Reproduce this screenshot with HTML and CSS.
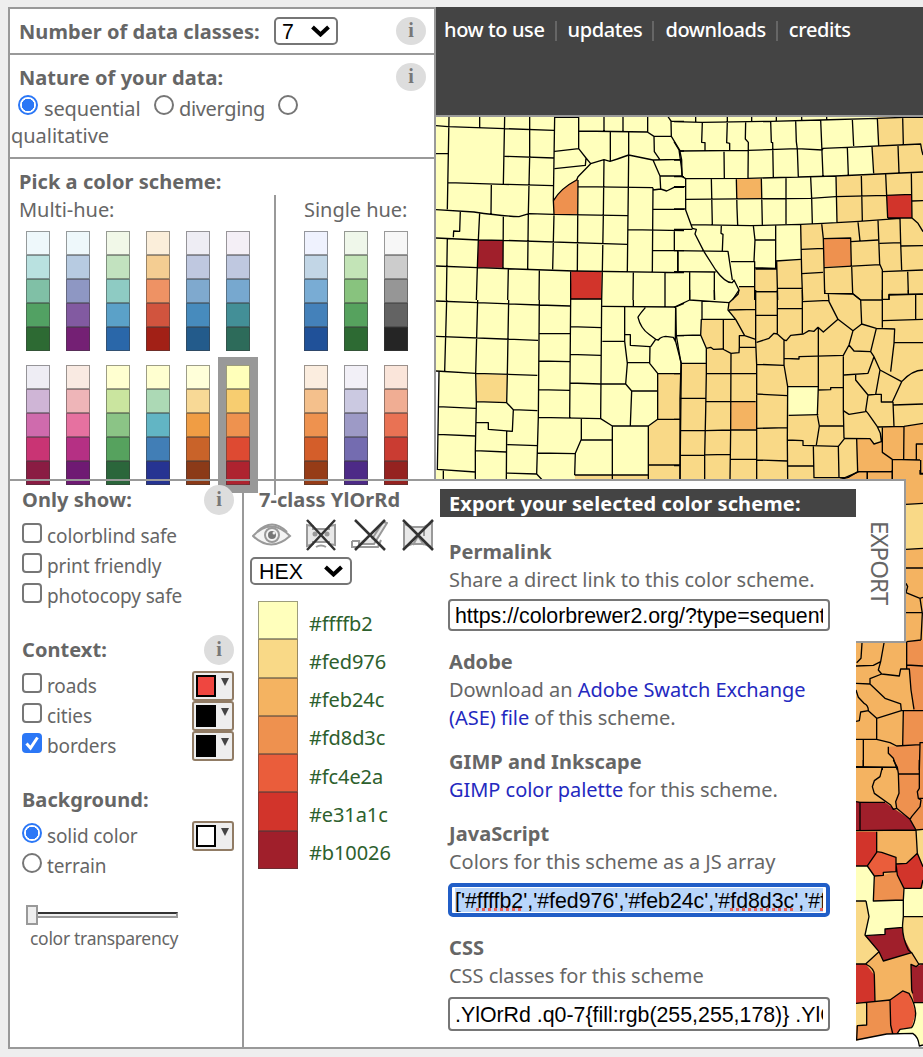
FILE: index.html
```
<!DOCTYPE html>
<html lang="en">
<head>
<meta charset="utf-8">
<title>ColorBrewer: Color Advice for Maps</title>
<link rel="stylesheet" href="styles.css">
</head>
<body>
<svg class="map" viewBox="436 117 487 930" width="487" height="930" aria-hidden="true">
  <rect x="436" y="117" width="487" height="930" fill="#ffffbc"/>
  <path fill="#f9d987" d="M877 117L878 146 872 147 874 174 836 177 837 223 800 225 801 260 776 261V269H755V287H739V291L732 300 728 303 729 310 735 319H701V335L706 348V363H681V373L658 374V419L649 426 648 475H575V480L923 700V117Z"/>
  <path fill="#f4b361" d="M905 440H923V1047H856V640H905Z"/>
  <g transform="translate(434 0) scale(.33333)">
    <path fill="#ee914f" d="M359 601Q380 565 432 535L430 643H360Z"/>
    <path fill="#a01f2b" d="M133 720 207 721V803H131Z"/>
    <path fill="#d2342b" d="M412 813 503 815V898H410Z"/>
  </g>
  <g transform="translate(674 100) scale(.33333)">
    <path fill="#f4b361" d="M187 236H262L263 296H188Z"/>
    <path fill="#ee914f" d="M448 416 530 414 532 498 450 500Z"/>
    <path fill="#d2342b" d="M638 286 712 283 714 354H641Z"/>
  </g>
  <g transform="translate(434 290) scale(.33333)">
    <path fill="#f9d987" d="M127 252 220 254 217 338 127 335Z"/>
    <path fill="#fff" d="M6 245H15L10 540H6Z"/>
  </g>
  <g transform="translate(674 290) scale(.33333)">
    <path fill="#ffffbc" d="M341 290H431V374L344 376Z"/>
    <path fill="#f4b361" d="M172 335H246V418L170 420Z"/>
    <path fill="#f4b361" d="M548 447H588L600 462 622 455 626 412 690 410 747 400V600H510V565L550 545Z"/>
  </g>
  <g transform="translate(840 470) scale(.33333)">
    <path fill="#f9d987" d="M198 103 249 100V235L198 238ZM0 0H50V7L25 22 0 28Z"/>
    <path fill="#ee914f" d="M200 515 249 510V900H172L160 865 145 850V830L188 828 190 722H220L213 660 208 597H200Z"/>
  </g>
  <g transform="translate(840 760) scale(.33333)">
    <path fill="#ee914f" d="M165 0H249V208H228L210 178 170 145 167 125 177 100 175 40ZM103 348 130 346 168 335 172 345 190 385V420L100 423ZM80 728 150 720 152 822 50 840V797L80 795Z"/>
    <path fill="#f9d987" d="M228 210H249V320L232 280ZM48 423H78L87 470 75 527 117 575 77 612H48ZM190 470H249V610L238 615 215 578 205 570 188 530V490ZM48 730 80 728V795L48 797Z"/>
    <path fill="#d2342b" d="M48 215H110V277L82 318H48ZM168 312 200 310 232 280 249 320V360L243 385H192L172 345ZM48 612H77L103 645 105 725 48 730Z"/>
    <path fill="#a01f2b" d="M48 125 135 127 165 148 210 178 228 210 48 212ZM75 527 135 523V507L188 502 190 530 215 578 130 603 117 575ZM213 613 228 620 249 612V728H222L215 690Z"/>
    <path fill="#ea5d3b" d="M110 277H125L168 292V335L130 337V346L103 348 82 318ZM150 720 188 693 207 700 227 760 215 803 180 808 172 820H152Z"/>
    <path fill="#ffffbc" d="M48 318H82L103 348 100 423H48ZM192 385H249V470H190ZM78 423 190 420 188 502 135 507V523L75 527 87 470ZM222 728H249V855L238 858 218 820H172L180 808 215 803 227 760Z"/>
    <path fill="#fff" d="M48 842 140 822 218 820Q235 830 238 858L249 855V870H48Z"/>
  </g>
  <g class="borders">
    <path transform="translate(434 0) scale(.33333)" d="M6 377L42 380 212 386 360 391M45 350L40 628M137 350V382M212 350L208 553M287 350V470L283 640 281 807M6 461H44M212 469L360 474M42 548L208 553 358 557M172 553L171 642M6 629L120 636Q200 648 255 650L285 641 358 643 580 647M362 350L358 600 360 643 356 808M362 352H434M434 350V446L362 454M434 446L456 474 454 496 362 506M456 474L470 491 510 479 528 484 550 477 584 465 657 480 742 478M470 491L432 530 428 540Q380 565 359 601M432 540L430 812M434 393L640 396 660 409 712 409M510 350V393M567 350V394M641 350V396M702 350L711 363 712 409 737 450 743 480 744 530 750 530M711 364H750M737 453H750M529 396V482M584 396V465L583 560 580 815M660 409L661 455 677 478M657 480L678 528 680 566M678 528H744M432 560L657 563M510 480L508 647 505 815M657 563L656 690 655 815M657 570L680 567 698 573 720 562 750 562M657 628H750M583 689L750 692M721 692V752M656 752H750M731 752V815M79 633L77 694 59 693 58 712M6 714L135 720 208 721 580 733M137 638L133 720 130 803 127 900M208 648L207 805M40 714L37 900M6 798L130 803 420 813 750 818M223 808L221 900M316 812L315 900M410 813V900M505 815L503 900M598 817L597 900M693 818V900M410 897H503"/>
    <path transform="translate(674 100) scale(.33333)" d="M0 65L85 67 290 64 440 60 610 55 690 52 747 52M65 50V65M160 50V65M233 50V64M307 50V62M383 50V62M458 50V60M85 67L83 127 93 128V152M160 65L158 128 167 130V151M215 65L214 117 223 127 222 235M290 64L292 127 296 128 298 235M365 62L367 125 370 148 373 232M440 60L447 228M535 57L539 138M610 55L614 136M686 52L688 133M15 153L222 151 370 146 445 150 447 145 520 142 740 132 743 150 747 165M150 153L151 235M520 142L523 225M594 140L599 220M672 136L675 218M0 125L15 150 22 200 25 230M0 180H20M0 230H25L35 236V330L55 385 67 388 63 402 90 455 125 510Q155 550 175 548L180 540 195 570 175 600M35 236L222 235 485 228 747 216M0 260H33M35 298L410 295 485 290 637 286 712 283M112 236L115 375M187 236L189 325 191 375M262 236L265 374M336 235V372M410 232L413 295 415 370M486 230L489 368M562 226L565 362M635 222L641 354M712 218L714 354M747 302L714 303M641 354L714 354 732 370 747 395M0 327H35M50 374L230 377 380 373 447 370 555 364 678 355M0 388H55M142 377L141 400 147 403 145 452M238 377L243 420 240 483M305 377V420H243M305 420V505L243 503M171 485H242V600M0 452L162 454 175 540M12 452V515M0 515L125 516M47 516V600M121 516V600M380 373L383 520 386 600M305 483L380 478M308 483L311 600M245 507H308M195 560H242M243 575H308M310 565H384M383 448L447 445M383 521L447 517M443 370L448 416 452 580 537 581 560 600M448 416L530 414 532 498M530 425L612 420M552 366L558 423M612 360L617 492 625 510V600M452 503L617 494M533 498L536 580M617 430L680 428 683 510M678 355L680 428M680 438L747 437M625 515L747 510M701 512L703 580M645 600V585L747 582"/>
    <path transform="translate(434 290) scale(.33333)" d="M6 33L130 38 315 45 408 48M505 49L725 51 750 40M38 30L32 243M131 30L125 250 127 340 124 480V570M224 30L220 253 218 340M316 30L313 380 308 552M410 30L407 385M503 30L500 385M598 30V50M693 30V50M408 110L503 113M408 193L500 196M407 279L500 282H575M6 139L312 151M315 130L408 131M313 213L407 215M312 299L407 301M6 243L125 250 310 256M15 245L10 540M12 350L125 355M12 433L124 438M10 538L124 546M28 542V570M127 335L218 338 238 359 310 362M238 359L235 424 163 418V398L124 397M218 424L217 570M124 482L217 486M220 464L310 467M217 549L308 552 325 570M313 382L500 386 535 408H643L671 388H738M442 386V448L424 490 422 555M442 450H535V408M535 408V570M310 489L424 491M422 555H643M643 408V570M505 154H572M572 51V154L580 220 575 282 593 303 589 406M572 134H589V166L648 170 647 220 671 250V388M580 218H647M593 303H671M671 251H740M634 53Q615 75 612 82 620 115 645 133L665 148 650 170M665 148L673 150Q680 140 695 139L718 142 725 155 742 220M725 51L724 155M725 137H750M742 220L738 570M643 525H740"/>
    <path transform="translate(674 290) scale(.33333)" d="M0 52L47 30 165 38M47 0V30M121 0L122 30M195 0L192 13 165 38 162 60 185 88 212 137 245 148M84 33V88M5 50L7 137 80 135 82 88H184M148 88V178M80 135L97 175 110 172 118 178 146 177 171 190 195 188 196 172H245M196 172V137H212M7 137L21 220 18 325V570M21 220H97M97 175V250L95 365 92 495V570M0 251H18M95 251H246M18 325H95M97 335H245M0 388H18M18 421L95 422 169 420H246M0 527H18M18 496L168 493M171 190L170 420 168 570M168 508H248M245 0V155L248 225V570M245 5H308M165 60L245 58M247 76H310M310 0V130M310 56H385M385 0V130M385 35L463 31M452 0V10L537 12 560 30M463 12L465 35 492 88 537 122 563 102 560 30H627M248 157L285 145 300 130 310 132 330 150 337 152 350 136 388 132 405 122 420 124 432 112 448 126 492 88M563 102L607 115 662 117 660 160 650 245M625 0V113M627 28H645V13H747M703 0V13M725 13V90M627 92L747 88M660 158H747M433 112V290L430 375 436 408M330 150V225L341 290 340 450 341 570M248 223L330 226M330 205L375 207V200L510 196M246 312L340 317M341 290H431M433 300L470 299V293L508 292M344 376L433 374M436 408H508M248 415L340 413M436 408L427 465M340 450L387 452V466L493 469 512 445 588 446 600 462 622 455 619 430 610 410 582 370 575 362 582 315 545 270V255M248 510L340 513M341 528H418M418 467L420 563H513L555 545 655 544M493 469L495 563M508 196V360L510 445M508 196L525 165 537 122M525 165L540 183 590 185 607 115M590 185L600 200 582 250 510 255M600 200L618 240 683 275M618 240L605 313 582 315M605 313H622V336H655L683 275Q715 240 747 240M657 336L660 410M657 345L747 342M508 362L525 373 575 365M610 411L690 409 747 400M625 411V487L655 508 738 510M690 409L689 508M655 508V570M740 510V550H747M727 508V462H747M548 447L551 545M580 545V570"/>
    <path transform="translate(840 470) scale(.33333)" d="M50 7L25 22 0 28M50 5H157M82 5V27M157 0V27M240 0V12H249M198 103L249 100M198 238L249 235M198 294H249M198 340L203 350 198 368 240 385 249 382M240 385L247 430 243 510M198 428H247M200 515L243 510M200 515V585L249 588M66 519L63 565 50 578M132 519L122 575 115 600 125 612 178 618 182 597H208L213 660 222 718M200 519V597M48 588L100 586 122 575M48 640L90 642V626L125 612M90 642L135 685 182 702 184 722 110 745 85 722Q85 705 72 700L55 682 48 660M85 722L62 726 58 752 48 754M110 745V808M184 722H249M190 722L188 828M48 808H110L150 818 170 828 240 824V818H249M145 830V850L160 865 172 900M240 824L238 900M70 808V892M48 890L172 892M127 892V900"/>
    <path transform="translate(840 760) scale(.33333)" d="M70 0V22M48 22H170M127 22L120 50 103 62 97 80 103 100 152 135 160 148 170 145 167 125 177 100 175 40 172 22 160 0M175 42H238M238 0V85L232 95 235 115 243 120 240 140 215 170 210 178 170 145M235 115H249M48 125L60 127H135M60 127V212M48 212L228 210 210 178M110 215V277L82 318 103 348 130 346V337L168 335V292L125 277 110 275M48 318H82M103 348L100 423 190 420 192 385 172 345 168 312 200 310 232 280 228 210 249 208M232 280L249 320M249 360L243 385H192M190 420V470H249M78 423L87 470 75 525 117 575 130 603 215 578 205 570Q185 530 188 490L190 470M48 423H78M75 527L135 523V507L188 502M117 575L77 612Q103 625 103 645L105 725M48 612H77M215 578L238 615M249 612H238L228 620 213 613 215 690 218 700M48 730L150 720 188 693 207 700Q225 730 227 760 225 790 215 803L180 808 172 820M150 720L152 795 158 820M80 728V795L52 797 50 838M48 840L140 822 218 820Q235 830 238 858L249 855M218 728H249"/>
  </g>
</svg>

<div class="page">
  <div class="top">
    <section class="setup">
      <div class="row classes">
        <b>Number of data classes:</b>
        <span class="select small"><span>7</span><svg width="19" height="12" viewBox="0 0 19 12"><path d="M1.5 2 9.5 9.5 17.5 2"/></svg></span>
        <i class="info">i</i>
      </div>
      <div class="row nature">
        <div class="head"><b>Nature of your data:</b><i class="info">i</i></div>
        <div class="kinds"><span class="radio on"></span><span class="k1">sequential</span><span class="radio"></span><span class="k2">diverging</span><span class="radio"></span></div>
        <div class="qual">qualitative</div>
      </div>
      <div class="row pick">
        <b>Pick a color scheme:</b>
        <div class="hues">
          <div class="multi"><div class="hue-title">Multi-hue:</div><div class="ramps" id="multi"></div></div>
          <div class="single"><div class="hue-title">Single hue:</div><div class="ramps" id="single"></div></div>
        </div>
      </div>
    </section>
    <nav class="menu"><span>how to use</span><i></i><span>updates</span><i></i><span>downloads</span><i></i><span>credits</span></nav>
  </div>

  <div class="bottom">
    <section class="filters">
      <div class="head"><b>Only show:</b><i class="info">i</i></div>
      <div class="opt"><span class="check"></span>colorblind safe</div>
      <div class="opt"><span class="check"></span>print friendly</div>
      <div class="opt"><span class="check"></span>photocopy safe</div>
      <div class="head gap"><b>Context:</b><i class="info">i</i></div>
      <div class="opt"><span class="check"></span>roads<span class="picker red"><i></i></span></div>
      <div class="opt"><span class="check"></span>cities<span class="picker"><i></i></span></div>
      <div class="opt"><span class="check on"><svg width="20" height="20" viewBox="0 0 20 20"><path d="M4.5 10.5 8.5 15 15.5 4.5"/></svg></span>borders<span class="picker"><i></i></span></div>
      <div class="head gap"><b>Background:</b></div>
      <div class="opt"><span class="radio on"></span>solid color<span class="picker white"><i></i></span></div>
      <div class="opt"><span class="radio"></span>terrain</div>
      <div class="slider"><span class="knob"></span><span class="track"></span></div>
      <div class="slider-label">color transparency</div>
    </section>

    <section class="scheme">
      <b class="name">7-class YlOrRd</b>
      <div class="flags">
        <svg width="40" height="34" viewBox="0 0 40 34"><g class="ink"><path fill="#f4f4f4" d="M1 18Q19-1 38 18 19 35 1 18Z"/><path d="M5 14Q20-1 35 14"/><circle cx="20" cy="17" r="7"/></g><circle cx="20" cy="17" r="4" fill="#777"/><circle cx="22" cy="15" r="1.5" fill="#eee"/></svg>
        <svg width="34" height="34" viewBox="0 0 34 34"><path class="ink" fill="#eee" d="M3 7 9 8V11H25V8L31 7V27L25 26V24H9V26L3 28Z"/><path class="ink" d="M12 29Q17 26 22 29"/><circle cx="11" cy="16" r="2.5" fill="#999"/><circle cx="23" cy="16" r="2.5" fill="#999"/><path class="cross" d="M3 2 31 32M31 2 3 32"/></svg>
        <svg width="38" height="34" viewBox="0 0 38 34"><path class="ink" fill="#ddd" d="M2 23H9V26H24L37 5 33 4 22 21"/><path class="ink" d="M2 23V29H28L31 22"/><path class="cross" d="M5 2 35 32M35 2 5 32"/></svg>
        <svg width="34" height="34" viewBox="0 0 34 34"><path class="ink" fill="#eee" d="M4 6 12 9H24L32 5V29L24 26H12L4 29Z"/><path class="ink" d="M13 27 18 18 24 27M24 9V18"/><path class="cross" d="M3 2 33 32M33 2 3 32"/></svg>
      </div>
      <span class="select hex"><span>HEX</span><svg width="19" height="12" viewBox="0 0 19 12"><path d="M1.5 2 9.5 9.5 17.5 2"/></svg></span>
      <div class="legend" id="legend"></div>
    </section>

    <section class="export">
      <b class="bar">Export your selected color scheme:</b>
      <div class="block"><b>Permalink</b><p>Share a direct link to this color scheme.</p><div class="field"><span>https://colorbrewer2.org/?type=sequential</span></div></div>
      <div class="block adobe"><b>Adobe</b><p>Download an <a>Adobe Swatch Exchange</a></p><p><a>(ASE) file</a> of this scheme.</p></div>
      <div class="block gimp"><b>GIMP and Inkscape</b><p><a>GIMP color palette</a> for this scheme.</p></div>
      <div class="block js"><b>JavaScript</b><p>Colors for this scheme as a JS array</p><div class="field focus"><span>['#<u>ffffb2</u>','#fed976','#feb24c','#<u>fd8d3c</u>','#<u>fc4e2a</u>'</span></div></div>
      <div class="block css"><b>CSS</b><p>CSS classes for this scheme</p><div class="field"><span>.YlOrRd .q0-7{fill:rgb(255,255,178)} .YlOrRd</span></div></div>
    </section>
    <div class="tab"><span>EXPORT</span></div>
  </div>
</div>
<script src="main.js"></script>
</body>
</html>
```
FILE: styles.css
```
* { box-sizing: border-box; }
body { margin: 0; height: 1057px; overflow: hidden; position: relative; background: #eee; color: #666; font: 20px/28px "Noto Sans", "Open Sans", sans-serif; letter-spacing: -.04px; white-space: nowrap; }
b { font-weight: 700; letter-spacing: .06px; }
p { margin: 0; }
.map { position: absolute; left: 436px; top: 117px; }
.borders path { fill: none; stroke: #000; stroke-width: 4; stroke-linejoin: round; }
.page { position: relative; padding: 7px 0 0 8px; }
.top { position: relative; z-index: 1; display: flex; height: 472px; }
.setup { width: 428px; height: 474px; border: 2px solid #999; background: #fff; }
.row { border-bottom: 2px solid #999; }
.row:last-child { border: 0; }
.classes { height: 46px; display: flex; align-items: center; padding-left: 9px; }
.classes b { padding-top: 2px; }
.classes .select { margin-left: auto; }
.classes .info { margin-left: 58px; }
.info { width: 30px; height: 28px; margin-right: 8px; border-radius: 50%; background: #ddd; color: #777; font: bold 20px/27px "Liberation Serif", serif; text-align: center; letter-spacing: 0; }
.select { display: flex; align-items: center; justify-content: space-between; height: 28px; border: 2px solid #767676; border-radius: 5px; background: #fff; color: #000; font: 21.33px/26px "Liberation Sans", sans-serif; letter-spacing: 0; padding: 0 7px 0 6px; }
.select span { padding-top: 1px; }
.select svg path { fill: none; stroke: #000; stroke-width: 4; }
.small { width: 64px; padding-right: 6px; }
.nature { height: 104px; padding-top: 9px; }
.nature .info { margin-top: -1px; }
.head { display: flex; justify-content: space-between; padding-left: 9px; height: 30px; }
.kinds { display: flex; padding-left: 8px; height: 28px; margin-top: 1px; }
.radio, .check { flex: none; width: 20px; height: 20px; border: 2px solid #767676; background: #fff; border-radius: 50%; }
.radio.on { border-color: #2b77f6; background: radial-gradient(circle, #2b77f6 6px, #fff 6.5px); }
.check { border-radius: 4px; }
.check.on { border: 0; background: #2b77f6; }
.check svg { display: block; }
.check path { fill: none; stroke: #fff; stroke-width: 3; }
.k1 { width: 110px; margin-left: 6px; letter-spacing: -.15px; }
.k2 { width: 99px; margin-left: 5px; letter-spacing: -.35px; }
.qual { padding-left: 1px; margin-top: -1px; }
.pick { padding: 9px 0 0 9px; }
.pick > b { display: block; }
.hues { display: flex; height: 300px; margin-top: -1px; }
.multi { width: 257px; border-right: 2px solid #999; }
.single { padding-left: 28px; }
.hue-title { height: 36px; padding-top: 1px; }
.ramps { display: grid; gap: 14px 16px; justify-content: start; }
.multi .ramps { grid-template-columns: repeat(6, 24px); margin-left: 7px; }
.single .ramps { grid-template-columns: repeat(3, 24px); }
.ramp { height: 120px; }
.ramp span { display: block; height: 24px; border: 1px solid rgba(60,60,60,.5); }
.ramp.sel { outline: 8px solid #999; }
.menu { flex: 1; height: 110px; border-bottom: 2px solid #999; background: #444; color: #fff; display: flex; padding: 9px 0 0 8px; letter-spacing: -.4px; font-weight: 500; }
.menu i { width: 2px; height: 20px; margin: 5px 11px 0 10px; background: #666; }
.bottom { position: relative; display: flex; height: 570px; border-bottom: 2px solid #999; z-index: auto; }
.bottom::before { content: ""; position: absolute; z-index: 2; left: 0; top: 0; width: 898px; height: 2px; background: #999; }
.filters { width: 236px; border: solid #999; border-width: 0 2px; padding-top: 5px; }
.filters, .scheme, .export { background: #fff; }
.filters .head { padding-left: 12px; }
.filters .head b { line-height: 32px; }
.filters .info { position: relative; z-index: 2; height: 30px; line-height: 29px; margin-top: 1px; }
.gap { margin-top: 30px; }
.opt { display: flex; gap: 5px; padding-left: 12px; height: 30px; line-height: 33px; font-size: 19px; letter-spacing: -.12px; }
.filters > .head + .opt { margin-top: 6px; }
.opt + .opt + .opt + .head { margin-top: 24px; }
.opt .check, .opt .radio { margin-top: 3px; }
.picker { width: 42px; height: 30px; margin: 1px 8px 0 auto; border: 2px solid #917c65; border-radius: 3px; background: #eee; display: flex; padding: 2px; color: #444; }
.picker i { width: 20px; height: 22px; border: 2px solid #000; background: #000; }
.picker.red i { background: #ef4640; }
.picker.white i { background: #fff; }
.picker::after { content: ""; margin: 3px 0 0 5px; border: solid transparent; border-width: 8px 4px 0; border-top-color: #444; height: 8px; }
.slider { display: flex; align-items: center; margin: 25px 0 0 16px; height: 20px; }
.knob { width: 12px; height: 20px; border: 2px solid #999; background: #eee; }
.track { width: 140px; height: 6px; border: 2px solid #999; border-left: 0; border-top-color: #333; background: #eee; }
.slider-label { margin: -1px 0 0 20px; font-size: 17.5px; letter-spacing: -.3px; }
.scheme { width: 192px; padding: 7px 0 0 6px; }
.scheme .name { display: block; padding-left: 9px; }
.flags { display: flex; margin: 4px 0 0 2px; height: 34px; gap: 12px; }
.flags svg { flex: none; }
.ink { fill: none; stroke: #999; stroke-width: 2; }
.flags path.ink[fill] { fill: #e8e8e8; }
.cross { stroke: #333; stroke-width: 2.5; fill: none; }
.hex { width: 102px; margin-top: 5px; padding-left: 7px; }
.legend { padding: 16px 0 0 8px; color: #2d602d; letter-spacing: -.1px; }
.legend div { display: flex; height: 38.3px; }
.legend div span { width: 40px; border: 1px solid rgba(60,60,60,.5); margin-right: 11px; }
.legend em { font-style: normal; margin-top: 8.5px; }
.export { width: 420px; padding: 10px 0 0 4px; }
.bar { display: block; height: 28px; background: #444; color: #fff; padding-left: 9px; line-height: 29px; letter-spacing: .1px; }
.block { padding: 16px 0 0 9px; }
.bar + .block { padding-top: 20px; }
.block > b { display: block; }
.block > b, .block > p { position: relative; top: 1px; }
.field { width: 382px; height: 32px; margin: 6px 0 0 -1px; border: 2px solid #767676; border-radius: 4px; background: #fff; color: #000; font: 21.33px/27px "Liberation Sans", sans-serif; letter-spacing: 0; padding: 2px 5px 0; }
.field span { display: block; overflow: hidden; }
.focus { height: 34px; margin-top: 8px; border: 4px solid #215ec7; border-radius: 5px; padding: 1px 3px; }
.focus span { height: 24px; background: #b9d6fb; line-height: 27px; }
.focus u { text-decoration: underline dotted #e9605a 3px; text-underline-offset: 0; text-decoration-skip-ink: none; }
a { color: #2429c0; }
.css .field { height: 34px; margin-top: 8px; line-height: 29px; }
.tab { width: 50px; height: 164px; background: #fff; border: 2px solid #999; border-left: 0; display: flex; justify-content: center; padding: 40px 0 0 0; }
.tab span { writing-mode: vertical-rl; font-size: 24px; letter-spacing: -.9px; line-height: 48px; }
```
FILE: main.js
```
const multi = [
  ["#eef8fb","#b9e1e0","#80c0a6","#52a163","#2d6a33"],
  ["#eef8fb","#b7cbe1","#8e97c3","#825aa1","#742074"],
  ["#f1f8e8","#c2e2bf","#8ecbc3","#5ba1c8","#2a67a9"],
  ["#fbeeda","#f4cd92","#ee9264","#d1543e","#a22016"],
  ["#eeedf4","#bfc8e0","#7fa9ce","#478bbd","#235b8b"],
  ["#f4eff6","#bfc8e0","#77a8cf","#438f97","#2d6b5a"],
  ["#eeedf4","#cfb5d6","#cf6bad","#c93474","#8a1c43"],
  ["#f9eae2","#eeb5b8","#e671a0","#b53084","#6f1a73"],
  ["#ffffd0","#cae59f","#8bc486","#56a25e","#2b663b"],
  ["#ffffd0","#acd9b5","#62b5c4","#417eb6","#263492"],
  ["#ffffd9","#f8d996","#f09d44","#c96329","#8b3a18"],
  ["#ffffba","#f7cd70","#ee924f","#de4a32","#ae232f"]
];
const single = [
  ["#eff2fe","#c2d6e6","#79acd4","#4481ba","#205199"],
  ["#eff7ea","#c3e4b7","#88c37e","#56a25e","#2d6a33"],
  ["#f7f7f7","#cccccc","#969696","#636363","#252525"],
  ["#fbeddf","#f4c08c","#ee924f","#d45e2a","#963c17"],
  ["#f2f0f7","#cbc9e1","#9d9ac6","#746cb0","#4d2a87"],
  ["#fae5da","#f0ad93","#e97254","#ca3c32","#952220"]
];
const cell = c => `<span style="background:${c}"></span>`;
const ramp = (colors, selected) => `<div class="ramp${selected ? " sel" : ""}">${colors.map(cell).join("")}</div>`;
document.getElementById("multi").innerHTML = multi.map((c, i) => ramp(c, i === 11)).join("");
document.getElementById("single").innerHTML = single.map(c => ramp(c, false)).join("");

const legend = [
  ["#ffffb2","#ffffbc"], ["#fed976","#f9d987"], ["#feb24c","#f4b361"], ["#fd8d3c","#ee914f"],
  ["#fc4e2a","#ea5d3b"], ["#e31a1c","#d2342b"], ["#b10026","#a01f2b"]
];
document.getElementById("legend").innerHTML = legend.map(([name, c]) => `<div>${cell(c)}<em>${name}</em></div>`).join("");
```
